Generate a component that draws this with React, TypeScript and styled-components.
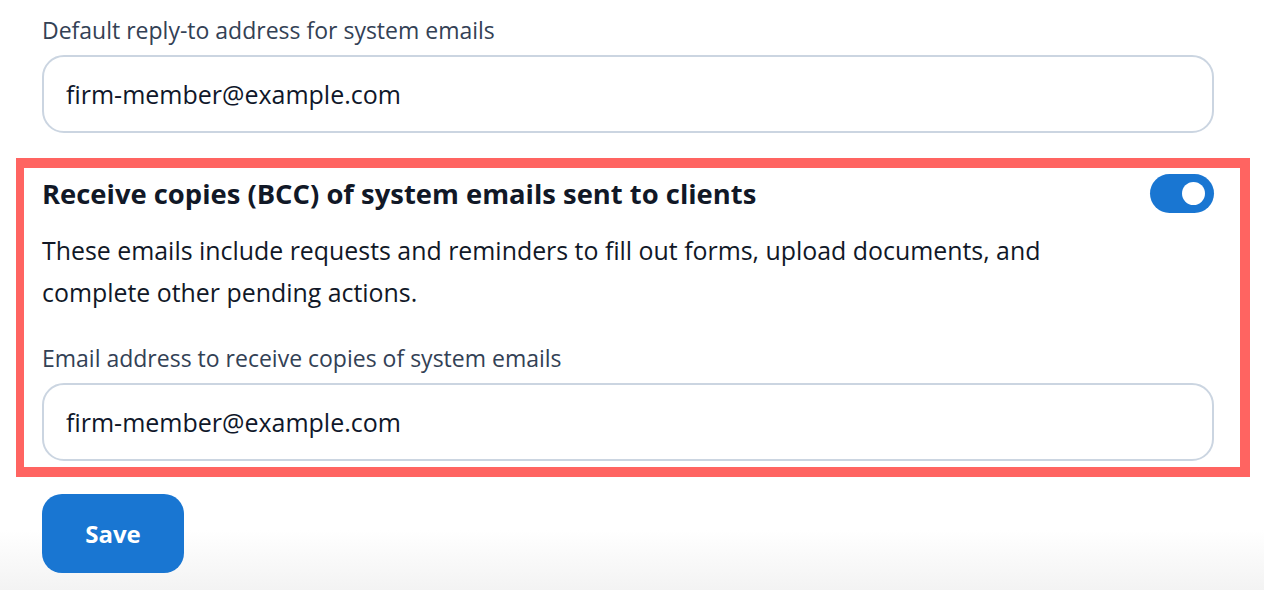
import styled, { createGlobalStyle } from "styled-components";
import { useState } from "react";

const GlobalStyle = createGlobalStyle`
  html, body {
    margin: 0;
    padding: 0;
  }
  body {
    min-height: 590px;
    background: linear-gradient(to bottom, #ffffff 0px, #ffffff 530px, #f3f3f3 590px);
    font-family: "Open Sans", Lato, sans-serif;
    color: #111827;
  }
`;

function App() {
  const [bcc, setBcc] = useState(true);
  const [replyTo, setReplyTo] = useState("firm-member@example.com");
  const [copyTo, setCopyTo] = useState("firm-member@example.com");

  return (
    <Page>
      <GlobalStyle />
      <Field>
        <Label>Default reply-to address for system emails</Label>
        <Input value={replyTo} onChange={(e) => setReplyTo(e.target.value)} />
      </Field>

      <Highlight>
        <HeaderRow>
          <Heading>Receive copies (BCC) of system emails sent to clients</Heading>
          <Toggle on={bcc} onClick={() => setBcc(!bcc)}>
            <Knob on={bcc} />
          </Toggle>
        </HeaderRow>
        <Description>
          These emails include requests and reminders to fill out forms, upload documents, and
          complete other pending actions.
        </Description>
        <Field>
          <Label>Email address to receive copies of system emails</Label>
          <Input value={copyTo} onChange={(e) => setCopyTo(e.target.value)} />
        </Field>
      </Highlight>

      <SaveButton>Save</SaveButton>
    </Page>
  );
}

export default App;

interface ToggleProps {
  on: boolean;
}

const Page = styled.div`
  padding: 16px 50px 0 42px;
  display: flex;
  flex-direction: column;
  align-items: stretch;
`;

const Field = styled.div`
  display: flex;
  flex-direction: column;
  gap: 11px;
`;

const Label = styled.label`
  font-size: 23px;
  line-height: 28px;
  color: #334155;
`;

const Input = styled.input`
  box-sizing: border-box;
  height: 78px;
  width: 100%;
  padding: 0 22px;
  border: 2px solid #cbd5e1;
  border-radius: 22px;
  font-family: inherit;
  font-size: 25px;
  color: #0f172a;
  background: #fff;
  outline: none;
`;

const Highlight = styled.section`
  margin: 25px -36px 0 -26px;
  border-style: solid;
  border-color: #ff6461;
  border-width: 10px 10px 10px 8px;
  padding: 6px 26px 6px 18px;
  display: flex;
  flex-direction: column;
`;

const HeaderRow = styled.div`
  display: flex;
  align-items: center;
  justify-content: space-between;
  height: 39px;
`;

const Heading = styled.h2`
  margin: 0;
  font-size: 27.4px;
  font-weight: 700;
  color: #111827;
`;

const Toggle = styled.button<ToggleProps>`
  position: relative;
  width: 64px;
  height: 39px;
  padding: 0;
  border: 0;
  border-radius: 20px;
  background: ${p => p.on ? "#1976d2" : "#cbd5e1"};
  cursor: pointer;
`;

const Knob = styled.span<ToggleProps>`
  position: absolute;
  top: 8px;
  left: ${p => p.on ? "32px" : "8px"};
  width: 23px;
  height: 23px;
  border-radius: 50%;
  background: #fff;
`;

const Description = styled.p`
  margin: 16px 0 31px;
  max-width: 1020px;
  font-size: 24.9px;
  line-height: 42px;
  color: #111827;
`;

const SaveButton = styled.button`
  margin-top: 17px;
  align-self: flex-start;
  width: 142px;
  height: 79px;
  border: 0;
  border-radius: 20px;
  background: #1976d2;
  color: #fff;
  font-family: inherit;
  font-size: 24px;
  font-weight: 700;
  cursor: pointer;
`;
